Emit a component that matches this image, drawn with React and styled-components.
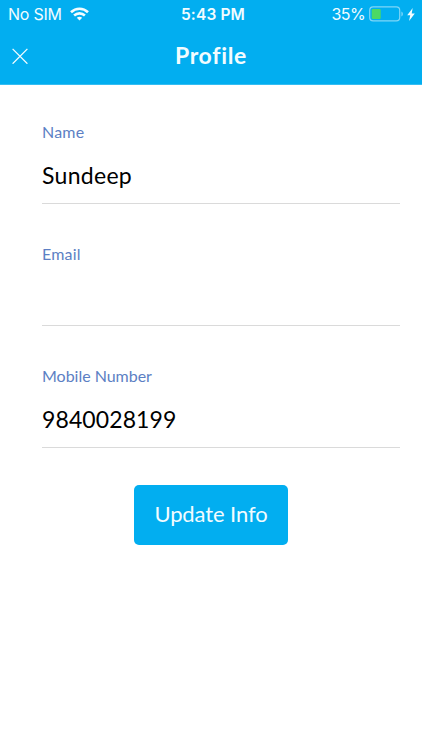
import React from "react";
import styled, { createGlobalStyle } from "styled-components";

const GlobalStyle = createGlobalStyle`
  * {
    box-sizing: border-box;
  }
  body {
    margin: 0;
    background: #fff;
  }
`;

const Screen = styled.div`
  height: 750px;
  overflow: hidden;
  background: #fff;
  font-family: "Lato", "Noto Sans", sans-serif;
`;

const Header = styled.header`
  height: 85px;
  background: #02aef0;
  border-bottom: 1px solid #35bdf2;
  color: #f2fcff;
`;

const StatusBar = styled.div`
  height: 28px;
  padding: 0 7px 0 8px;
  display: grid;
  grid-template-columns: 1fr auto 1fr;
  align-items: center;
  font-family: "Inter", sans-serif;
  font-size: 16px;
  line-height: 28px;
`;

const Carrier = styled.div`
  display: flex;
  align-items: center;
  gap: 8px;
  letter-spacing: -0.25px;
`;

const Time = styled.div`
  padding: 1px 0 0 3px;
  font-size: 15.5px;
  font-weight: 600;
  line-height: 27px;
  letter-spacing: 0.15px;
`;

const Power = styled.div`
  display: flex;
  align-items: center;
  justify-content: flex-end;
  gap: 4px;
  letter-spacing: -0.6px;

  svg:last-child {
    margin-left: -1px;
  }
`;

const TitleBar = styled.div`
  height: 56px;
  padding: 0 12px;
  display: grid;
  grid-template-columns: 1fr auto 1fr;
  align-items: center;
`;

const CloseButton = styled.button`
  width: 16px;
  height: 16px;
  padding: 0;
  border: 0;
  background: none;
  color: inherit;

  svg {
    display: block;
  }
`;

const Title = styled.h1`
  margin: 0 0 3px;
  font-size: 23px;
  font-weight: 700;
  line-height: 28px;
  letter-spacing: 0.7px;
`;

const Form = styled.form`
  padding: 37px 22px 0 42px;
`;

const Field = styled.div`
  height: 82px;
  margin-bottom: 40px;
  border-bottom: 1px solid #dadada;
`;

const Label = styled.label`
  display: block;
  color: #5c7fc4;
  font-size: 16px;
  line-height: 20px;
  letter-spacing: ${(props) => props.$spacing};
`;

const Value = styled.div`
  margin-top: 19px;
  color: #000;
  font-size: 23px;
  line-height: 28px;
  letter-spacing: ${(props) => props.$spacing};
`;

const UpdateButton = styled.button`
  display: block;
  width: 154px;
  height: 60px;
  margin: -3px 0 0 92px;
  padding: 0 0 4px;
  border: 0;
  border-radius: 5px;
  background: #02aef0;
  color: #f2fcff;
  font-family: inherit;
  font-size: 22px;
  letter-spacing: -0.1px;
`;

const fields = [
  { label: "Name", value: "Sundeep", labelSpacing: "0.2px", spacing: "0.3px" },
  { label: "Email", value: "", labelSpacing: "0.2px", spacing: "0" },
  { label: "Mobile Number", value: "9840028199", labelSpacing: "-0.02px", spacing: "0.1px" },
];

function WifiIcon() {
  return (
    <svg width="19" height="14" viewBox="0 0 19 14" fill="none" stroke="currentColor" strokeWidth="2.6">
      <path d="M1 5.2C5.8.6 13.2.6 18 5.2" />
      <path d="M4.1 8.5c3.1-2.9 7.7-2.9 10.8 0" />
      <path d="M6.8 10.8c1.6-1.5 3.8-1.5 5.4 0L9.5 13.5z" fill="currentColor" stroke="none" />
    </svg>
  );
}

function BatteryIcon() {
  return (
    <svg width="35" height="16" viewBox="0 0 35 16">
      <rect x="0.7" y="0.9" width="30" height="14" rx="3.4" fill="none" stroke="#7fd6f7" strokeWidth="1.2" />
      <rect x="2.7" y="3" width="9" height="10" rx="1" fill="#4cd964" />
      <path d="M32.4 5.4c2 .8 2 4.2 0 5z" fill="#7fd6f7" />
    </svg>
  );
}

function BoltIcon() {
  return (
    <svg width="8" height="13" viewBox="0 0 8 13" fill="currentColor">
      <path d="M5.7 0 .2 7.2h3L2.1 13 7.8 5.5H4.7z" />
    </svg>
  );
}

function App() {
  return (
    <Screen>
      <GlobalStyle />
      <Header>
        <StatusBar>
          <Carrier>
            No SIM
            <WifiIcon />
          </Carrier>
          <Time>5:43 PM</Time>
          <Power>
            35%
            <BatteryIcon />
            <BoltIcon />
          </Power>
        </StatusBar>
        <TitleBar>
          <CloseButton type="button" aria-label="Close">
            <svg width="16" height="16" viewBox="0 0 16 16" stroke="currentColor" strokeWidth="1.3">
              <path d="m.6.9 14.8 14.8M15.4.9.6 15.7" />
            </svg>
          </CloseButton>
          <Title>Profile</Title>
        </TitleBar>
      </Header>
      <Form>
        {fields.map((field) => (
          <Field key={field.label}>
            <Label $spacing={field.labelSpacing}>{field.label}</Label>
            <Value $spacing={field.spacing}>{field.value}</Value>
          </Field>
        ))}
        <UpdateButton type="button">Update Info</UpdateButton>
      </Form>
    </Screen>
  );
}

export default App;
